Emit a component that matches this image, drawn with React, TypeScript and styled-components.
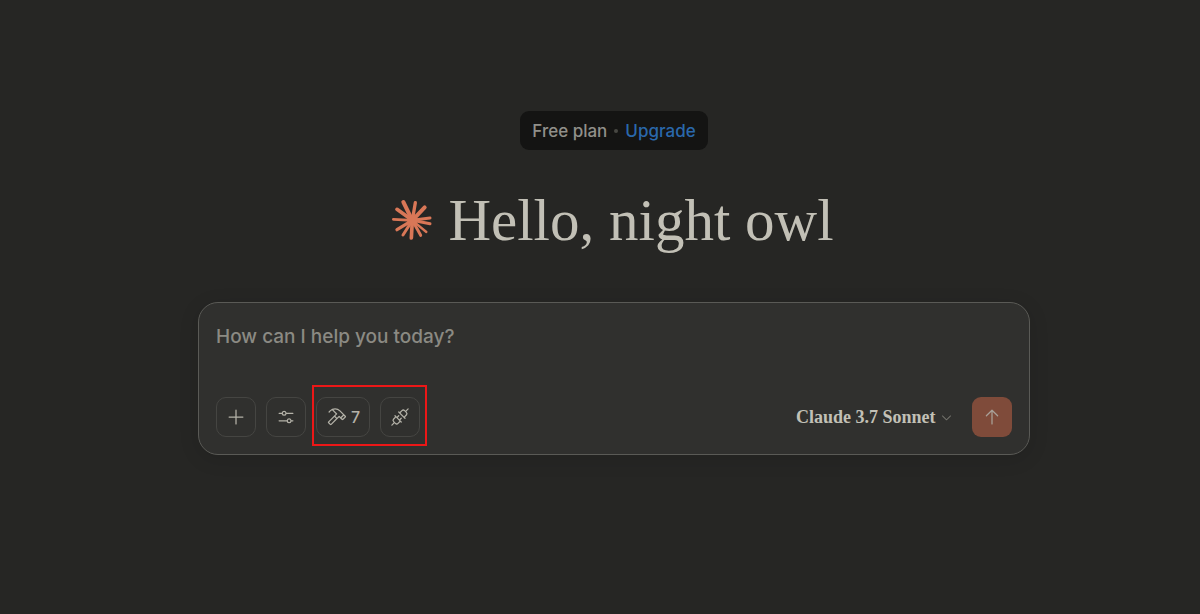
import React from "react";
import styled, { createGlobalStyle } from "styled-components";
import {
  PiArrowUp,
  PiCaretDown,
  PiHammer,
  PiPlugs,
  PiPlus,
  PiSlidersHorizontal,
} from "react-icons/pi";

const GlobalStyle = createGlobalStyle`
  *, *::before, *::after { box-sizing: border-box; }
  body {
    margin: 0;
    background: #262624;
    color: #c2c0b6;
    font-family: Inter, "Liberation Sans", sans-serif;
  }
`;

const Page = styled.main`
  display: flex;
  flex-direction: column;
  align-items: center;
  min-height: 100vh;
  padding: 111px 0 40px 28px;
`;

const PlanBadge = styled.div`
  display: flex;
  align-items: center;
  gap: 7px;
  height: 39px;
  padding: 0 12px;
  border-radius: 9px;
  background: #141413;
  color: #91908a;
  font-size: 17px;
  font-weight: 500;
`;

const Dot = styled.span`
  width: 4px;
  height: 4px;
  border-radius: 50%;
  background: #474743;
`;

const UpgradeLink = styled.a`
  color: #2a68ab;
  text-decoration: none;
`;

const Greeting = styled.div`
  display: flex;
  align-items: center;
  gap: 16px;
  height: 70px;
  margin: 35px 0 47px;
  padding-right: 2px;
`;

const Spark = styled.svg`
  width: 40px;
  height: 40px;
  overflow: visible;
  stroke: #d97757;
  stroke-linecap: round;
`;

const Title = styled.h1`
  margin: 0;
  color: #c2c0b6;
  font-family: "Liberation Serif", serif;
  font-size: 59px;
  font-weight: 400;
  line-height: 70px;
`;

const Composer = styled.form`
  display: flex;
  flex-direction: column;
  gap: 45px;
  width: 100%;
  max-width: 832px;
  padding: 19px 17px 17px;
  border: 1px solid #5a5a56;
  border-radius: 20px;
  background: #30302e;
  box-shadow: 0 4px 20px rgba(0, 0, 0, 0.12);
`;

const Prompt = styled.textarea`
  height: 30px;
  padding: 0;
  border: 0;
  outline: 0;
  resize: none;
  overflow: hidden;
  background: transparent;
  color: #c2c0b6;
  font: inherit;
  font-size: 19px;
  font-weight: 500;
  line-height: 30px;
  &::placeholder { color: #8b8a83; opacity: 1; }
`;

const Toolbar = styled.div`
  display: flex;
  align-items: center;
  gap: 10px;
`;

const ToolButton = styled.button`
  display: flex;
  align-items: center;
  justify-content: center;
  gap: 5px;
  min-width: 40px;
  height: 40px;
  padding: 0 9px;
  border: 1px solid #454542;
  border-radius: 10px;
  background: transparent;
  color: #b4b2a8;
  font: inherit;
  font-size: 16px;
  font-weight: 500;
`;

const Highlighted = styled.div`
  position: relative;
  display: flex;
  gap: 10px;
  &::after {
    content: "";
    position: absolute;
    inset: -12px -7px -9px -4px;
    border: 2px solid #ec1717;
    pointer-events: none;
  }
`;

const ModelPicker = styled.label`
  display: flex;
  align-items: center;
  gap: 4px;
  margin-left: auto;
  margin-right: 9px;
  color: #77766f;
`;

const ModelSelect = styled.select`
  appearance: none;
  padding: 0;
  border: 0;
  background: transparent;
  color: #c2c0b6;
  font-family: "Liberation Serif", serif;
  font-size: 18px;
  font-weight: 700;
`;

const SendButton = styled(ToolButton)`
  border: 0;
  border-radius: 9px;
  background: #7f4b3a;
  color: #a9a198;
`;

/* Each ray of the spark: tip x, tip y, stroke width. */
const rays: [number, number, number][] = [
  [52, 25, 12],
  [88, 27, 10],
  [116, 41, 12],
  [132, 73, 9],
  [132, 90, 9],
  [121, 115, 7],
  [104, 125, 9],
  [76, 133, 11],
  [51, 124, 9],
  [33, 108, 10],
  [22, 77, 8],
  [33, 47, 11],
];

export default function App() {
  return (
    <>
      <GlobalStyle />
      <Page>
        <PlanBadge>
          <span>Free plan</span>
          <Dot />
          <UpgradeLink href="#upgrade">Upgrade</UpgradeLink>
        </PlanBadge>
        <Greeting>
          <Spark viewBox="18 19 120 120" aria-hidden="true">
            {rays.map(([x, y, w]) => (
              <line key={`${x}-${y}`} x1="79" y1="80" x2={x} y2={y} strokeWidth={w} />
            ))}
            <circle cx="79" cy="80" r="16" fill="#d97757" stroke="none" />
          </Spark>
          <Title>Hello, night owl</Title>
        </Greeting>
        <Composer onSubmit={(e) => e.preventDefault()}>
          <Prompt aria-label="Message" placeholder="How can I help you today?" />
          <Toolbar>
            <ToolButton type="button" aria-label="Add content">
              <PiPlus size={20} />
            </ToolButton>
            <ToolButton type="button" aria-label="Settings">
              <PiSlidersHorizontal size={20} />
            </ToolButton>
            <Highlighted>
              <ToolButton type="button" aria-label="7 tools available">
                <PiHammer size={20} />
                <span>7</span>
              </ToolButton>
              <ToolButton type="button" aria-label="Connections">
                <PiPlugs size={20} />
              </ToolButton>
            </Highlighted>
            <ModelPicker>
              <ModelSelect aria-label="Model">
                <option>Claude 3.7 Sonnet</option>
              </ModelSelect>
              <PiCaretDown size={13} />
            </ModelPicker>
            <SendButton type="submit" aria-label="Send message">
              <PiArrowUp size={20} />
            </SendButton>
          </Toolbar>
        </Composer>
      </Page>
    </>
  );
}
